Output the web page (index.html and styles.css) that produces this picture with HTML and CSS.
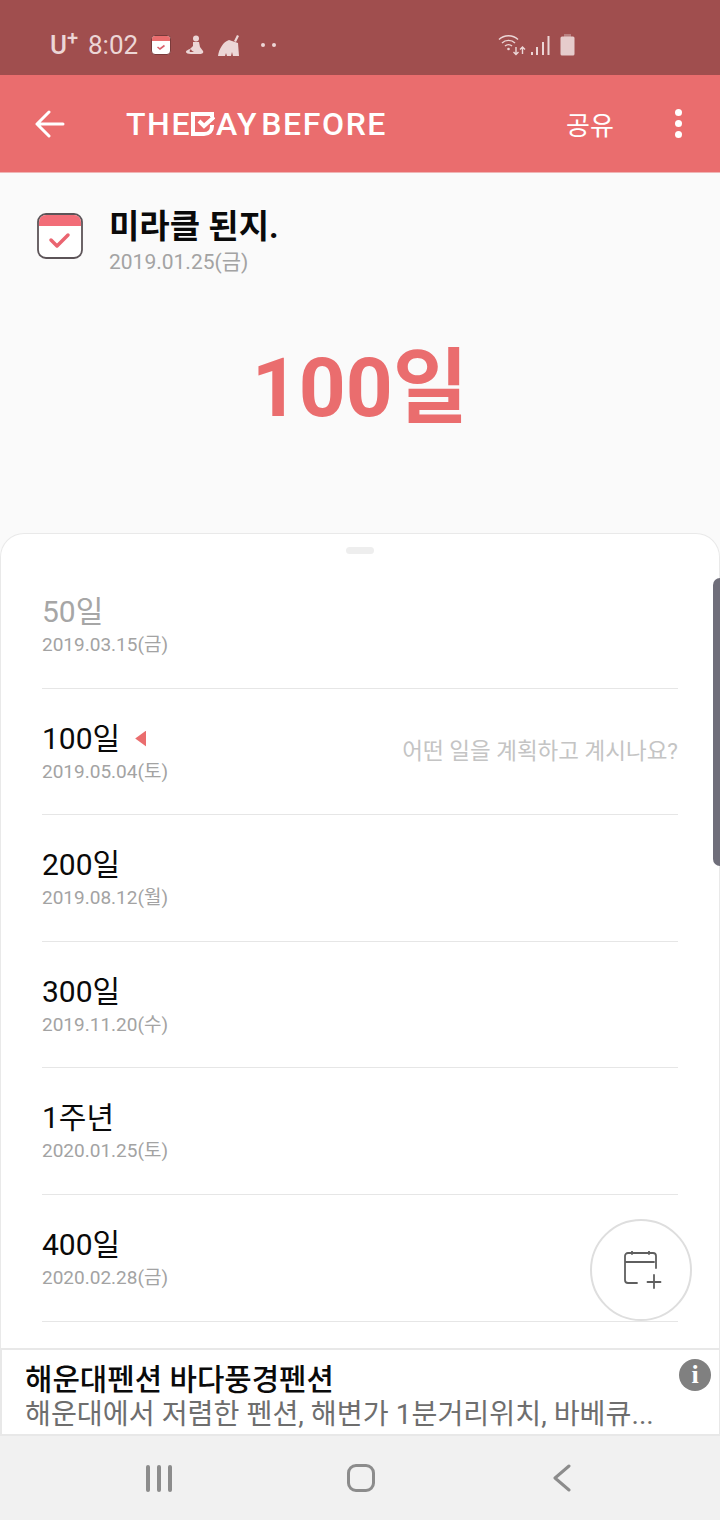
FILE: index.html
```html
<!DOCTYPE html>
<html lang="ko">
<head>
    <meta charset="UTF-8">
    <meta name="viewport" content="width=device-width, initial-scale=1.0">
    <title>The Day Before</title>
    <link rel="stylesheet" href="styles.css">
</head>
<body>
    <div class="phone">
        <div class="status">
            <div class="status-left">
                <span class="carrier">U<sup>+</sup></span>
                <span class="clock">8:02</span>
                <svg class="st-cal" width="20" height="20" viewBox="0 0 20 20"><rect x="0.5" y="0.5" width="19" height="19" rx="3.5" fill="#fff" stroke="#7a3b3b"/><path d="M1 4a3 3 0 0 1 3-3h12a3 3 0 0 1 3 3v2H1z" fill="#ea6d6e"/><path d="M6.5 12l2.5 2 4.5-3.5" fill="none" stroke="#d9606a" stroke-width="1.6"/></svg>
                <svg class="st-fig" width="20" height="20" viewBox="0 0 20 20" fill="#ecd6d6"><circle cx="11" cy="3.5" r="3"/><path d="M8 7h6l1 5 3 4c1 2-1 3-3 3H6c-3 0-5-1-5-2 0-2 3-2 5-4l2-2zM6 14c-1 1-2 2-1 3h4c-2-1-3-2-3-3z" fill-rule="evenodd"/></svg>
                <svg class="st-broom" width="23" height="21" viewBox="0 0 23 21" fill="#ecd6d6"><path d="M19 0l2 1-3 6-2-1zM11 5l9 3 1 13H15l-1-4-1 4H9l-1-3-1 3H0c1-7 5-14 11-16z"/></svg>
                <span class="st-dots"><i></i><i></i></span>
            </div>
            <div class="status-right">
                <svg width="28" height="22" viewBox="0 0 28 22" fill="none" stroke="#ecd6d6" stroke-width="1.4"><path d="M1 5.5c5-5 14-5 19 0M4 9c3.500-3.500 9.500-3.500 13 0M7 12c2-1.800 5-1.800 7 0"/><circle cx="10.500" cy="15" r="1.300" fill="#ecd6d6" stroke="none"/><path d="M18 13v7M15.500 18l2.500 2.500 2.500-2.500M24.500 20v-7M22 15.500l2.500-2.500 2.500 2.500"/></svg>
                <svg class="st-signal" width="19" height="21" viewBox="0 0 19 21" fill="#ecd6d6"><rect x="0" y="17" width="2" height="3"/><rect x="5" y="12" width="2" height="8"/><rect x="11" y="7" width="2" height="13"/><rect x="16.500" y="1" width="2" height="19"/></svg>
                <svg class="st-batt" width="15" height="22" viewBox="0 0 15 22" fill="#e6cccc"><rect x="4" y="0" width="7" height="3" fill="#b98080"/><rect x="0.500" y="2.500" width="14" height="19" rx="1.500"/></svg>
            </div>
        </div>

        <div class="appbar">
            <svg class="back" width="30" height="28" viewBox="0 0 30 28" fill="none" stroke="#fff" stroke-width="3" stroke-linecap="round" stroke-linejoin="round"><path d="M2 14h26M14 2L2 14l12 12"/></svg>
            <div class="logo">
                <span>THE</span>
                <svg class="logo-d" width="24" height="24" viewBox="0 0 24 24" fill="none" stroke="#fff" stroke-width="4"><path d="M21 5V2H2v20h11c5 0 8-3 8-8v-1"/><path d="M8 9l5 5 10-9"/></svg>
                <span>AY</span>
                <span class="logo-gap">BEFORE</span>
            </div>
            <span class="share">공유</span>
            <span class="more"><i></i><i></i><i></i></span>
        </div>

        <div class="head">
            <div class="head-row">
                <svg class="head-icon" width="46" height="46" viewBox="0 0 46 46"><rect x="1" y="1" width="44" height="44" rx="8" fill="#fff" stroke="#5c5458" stroke-width="1.800"/><path d="M2 9a7 7 0 0 1 7-7h28a7 7 0 0 1 7 7v4H2z" fill="#f26d78"/><path d="M14 27l6 6 11-11" fill="none" stroke="#ea6470" stroke-width="3.500" stroke-linecap="round" stroke-linejoin="round"/></svg>
                <div class="head-text">
                    <h1>미라클 된지.</h1>
                    <p>2019.01.25(금)</p>
                </div>
            </div>
            <div class="big-count">100일</div>
        </div>

        <div class="sheet">
            <div class="handle"></div>
            <ul class="list">
                <li class="row row-past">
                    <div><div class="row-title">50일</div><div class="row-date">2019.03.15(금)</div></div>
                </li>
                <li class="row">
                    <div><div class="row-title">100일<i class="marker"></i></div><div class="row-date">2019.05.04(토)</div></div>
                    <span class="row-hint">어떤 일을 계획하고 계시나요?</span>
                </li>
                <li class="row">
                    <div><div class="row-title">200일</div><div class="row-date">2019.08.12(월)</div></div>
                </li>
                <li class="row">
                    <div><div class="row-title">300일</div><div class="row-date">2019.11.20(수)</div></div>
                </li>
                <li class="row">
                    <div><div class="row-title">1주년</div><div class="row-date">2020.01.25(토)</div></div>
                </li>
                <li class="row">
                    <div><div class="row-title">400일</div><div class="row-date">2020.02.28(금)</div></div>
                </li>
            </ul>
        </div>

        <div class="ad">
            <div class="ad-title">해운대펜션 바다풍경펜션</div>
            <div class="ad-desc">해운대에서 저렴한 펜션, 해변가 1분거리위치, 바베큐...</div>
            <span class="ad-info">i</span>
        </div>

        <div class="navbar">
            <span class="nav-recent"><i></i><i></i><i></i></span>
            <span class="nav-home"></span>
            <svg width="18" height="28" viewBox="0 0 18 28" fill="none" stroke="#8c8c8c" stroke-width="3" stroke-linecap="round" stroke-linejoin="round"><path d="M16 2L2 14l14 12"/></svg>
        </div>

        <div class="scroll-tab"></div>
        <div class="fab">
            <svg width="40" height="40" viewBox="0 0 40 40" fill="none" stroke="#5f5f5f" stroke-width="1.800" stroke-linecap="round"><path d="M15 32H6a3 3 0 0 1-3-3V5a3 3 0 0 1 3-3h25a3 3 0 0 1 3 3v12M3 11h29M10 0v3M27 0v3M32 24v13M25.500 31h13"/></svg>
        </div>
    </div>
</body>
</html>
```

FILE: styles.css
```css
* {
    box-sizing: border-box;
}

body {
    margin: 0;
    background-color: #fff;
    font-family: Roboto, "Noto Sans CJK KR", sans-serif;
}

.phone {
    position: relative;
    width: 720px;
    height: 1520px;
    display: flex;
    flex-direction: column;
    overflow: hidden;
    background-color: #fafafa;
}

/* status bar */
.status {
    height: 75px;
    flex-shrink: 0;
    padding: 20px 145px 0 50px;
    display: flex;
    justify-content: space-between;
    align-items: flex-start;
    background-color: #a04e4e;
    color: #ecd6d6;
}

.status-left,
.status-right {
    display: flex;
    align-items: center;
    height: 50px;
}

.status-right svg {
    margin-left: 5px;
    flex-shrink: 0;
}

.st-signal {
    margin-right: 5px;
}

.carrier {
    font-size: 26px;
    font-weight: 500;
    width: 38px;
    line-height: 50px;
}

.carrier sup {
    font-size: 20px;
    line-height: 0;
    vertical-align: 9px;
}

.clock {
    font-size: 26px;
    width: 63px;
}

.st-cal {
    margin-right: 14px;
}

.st-fig {
    margin-right: 13px;
}

.st-broom {
    margin-right: 20px;
}

.st-dots {
    display: flex;
    gap: 7px;
}

.st-dots i {
    width: 4px;
    height: 4px;
    border-radius: 50%;
    background-color: #ecd6d6;
}

/* app bar */
.appbar {
    height: 98px;
    flex-shrink: 0;
    padding: 0 35px;
    display: flex;
    align-items: center;
    background-color: #ea6d6e;
    border-bottom: 1px solid #f0b5b5;
    color: #fff;
}

.back {
    margin-right: 61px;
    flex-shrink: 0;
}

.logo {
    display: flex;
    align-items: center;
    flex-shrink: 0;
    font-family: Roboto, sans-serif;
    font-size: 32px;
    font-weight: 500;
    letter-spacing: 1.600px;
    width: 260px;
    line-height: 1;
    white-space: nowrap;
}

.logo-d {
    flex-shrink: 0;
    margin-right: 1px;
}

.logo-gap {
    margin-left: 3px;
}

.share {
    margin-left: 180px;
    font-size: 26px;
    white-space: nowrap;
}

.more {
    margin-left: 61px;
    display: flex;
    flex-direction: column;
    gap: 4px;
}

.more i {
    width: 7px;
    height: 7px;
    border-radius: 50%;
    background-color: #fff;
}

/* top part */
.head {
    height: 360px;
    flex-shrink: 0;
    padding: 34px 37px 0;
}

.head-row {
    display: flex;
    align-items: flex-start;
}

.head-icon {
    margin: 6px 26px 0 0;
}

.head h1 {
    margin: 0;
    font-size: 33px;
    line-height: 40px;
    font-weight: 700;
    color: #0a0a0a;
}

.head p {
    margin: 2px 0 0;
    font-size: 21px;
    line-height: 26px;
    color: #a3a3a3;
}

.big-count {
    margin-top: 63px;
    text-align: center;
    font-size: 82px;
    line-height: 100px;
    font-weight: 700;
    color: #ea6d6e;
}

/* list sheet */
.sheet {
    flex: 1;
    min-height: 0;
    padding: 0 41px;
    background-color: #fff;
    border: 1px solid #e9e9e9;
    border-bottom: 0;
    border-radius: 24px 24px 0 0;
    overflow: hidden;
}

.handle {
    width: 28px;
    height: 7px;
    margin: 13px auto 8px;
    border-radius: 4px;
    background-color: #eeeeee;
}

.list {
    margin: 0;
    padding: 0;
    list-style: none;
}

.row {
    height: 126.600px;
    padding-top: 32px;
    display: flex;
    justify-content: space-between;
    align-items: flex-start;
    border-bottom: 1px solid #e6e6e6;
}

.row-title {
    display: flex;
    align-items: center;
    font-size: 30px;
    line-height: 36px;
    color: #0a0a0a;
}

.row-past .row-title {
    color: #a6a6a6;
}

.row-date {
    margin-top: 3px;
    font-size: 19px;
    line-height: 24px;
    color: #a3a3a3;
}

.marker {
    width: 11px;
    height: 16px;
    margin-left: 15px;
    background-color: #ea6d6e;
    clip-path: polygon(0 50%, 100% 0, 100% 100%);
}

.row-hint {
    margin-top: 16px;
    font-size: 22.500px;
    line-height: 28px;
    color: #c4c4c4;
}

/* ad banner */
.ad {
    position: relative;
    height: 88px;
    flex-shrink: 0;
    padding: 12px 23px 0;
    background-color: #fff;
    border: 2px solid #e8e8e8;
    border-right-width: 1px;
}

.ad-title {
    font-size: 29.800px;
    line-height: 36px;
    font-weight: 500;
    color: #0a0a0a;
}

.ad-desc {
    font-size: 28.200px;
    line-height: 34px;
    color: #6e6e6e;
    white-space: nowrap;
}

.ad-info {
    position: absolute;
    top: 9px;
    right: 8px;
    width: 32px;
    height: 32px;
    border-radius: 50%;
    background-color: #808080;
    color: #fff;
    font-family: "Liberation Serif", serif;
    font-size: 26px;
    font-weight: 700;
    line-height: 32px;
    text-align: center;
}

/* navigation bar */
.navbar {
    height: 84px;
    flex-shrink: 0;
    padding: 0 149px 0 146px;
    display: flex;
    justify-content: space-between;
    align-items: center;
    background-color: #f1f1f1;
}

.nav-recent {
    display: flex;
    gap: 7px;
}

.nav-recent i {
    width: 4px;
    height: 27px;
    border-radius: 2px;
    background-color: #8c8c8c;
}

.nav-home {
    width: 28px;
    height: 28px;
    margin-right: 3px;
    border: 3px solid #8c8c8c;
    border-radius: 9px;
}

/* things lying over the list */
.scroll-tab {
    position: absolute;
    top: 578px;
    right: 0;
    width: 7px;
    height: 288px;
    border-radius: 7px 0 0 7px;
    background-color: #6f6e7a;
}

.fab {
    position: absolute;
    top: 1219px;
    left: 590px;
    width: 102px;
    height: 102px;
    padding: 30px 0 0 30px;
    border: 2px solid #dedede;
    border-radius: 50%;
    background-color: #fff;
}
```
